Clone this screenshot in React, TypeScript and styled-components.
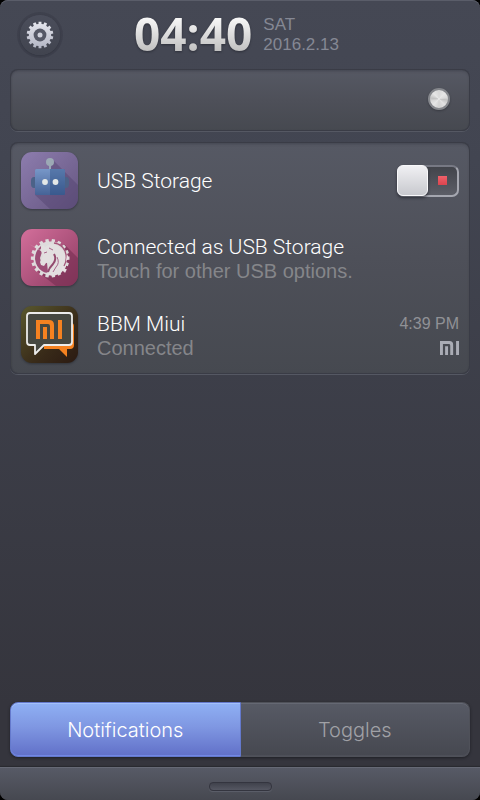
import React, { useState } from "react";
import styled, { createGlobalStyle, css } from "styled-components";

const GlobalStyle = createGlobalStyle`
  *, *::before, *::after { box-sizing: border-box; }
  body { margin: 0; background: #000; font-family: "Liberation Sans", Arial, sans-serif; }
  button, input { font: inherit; margin: 0; }
`;

const Shade = styled.div`
  min-height: 100vh;
  display: flex;
  flex-direction: column;
  overflow: hidden;
  border-radius: 8px;
  background: linear-gradient(#454854, #424551 20%, #35353d 88%, #35353d);
  box-shadow: inset 0 1px 0 #5a5d69;
`;

const Header = styled.header`
  display: flex;
  align-items: center;
  height: 69px;
  padding: 0 20px;
`;

const SettingsButton = styled.button`
  display: grid;
  place-items: center;
  width: 40px;
  height: 40px;
  padding: 0;
  border: 0;
  border-radius: 50%;
  background: linear-gradient(#4b4e5b, #41444f);
  box-shadow: 0 0 0 3px rgba(30, 32, 42, 0.16), 0 1px 2px rgba(20, 22, 30, 0.25);
`;

const Clock = styled.time`
  margin-left: 74px;
  padding-bottom: 4px;
  font: 700 46px/60px "Open Sans", "Noto Sans", sans-serif;
  color: transparent;
  background: linear-gradient(#f6f6f6 25%, #b9b9b9 82%);
  background-clip: text;
  -webkit-background-clip: text;
  filter: drop-shadow(0 1px 1px rgba(20, 22, 30, 0.5));
`;

const DateText = styled.div`
  margin-left: 11px;
  font-size: 17px;
  line-height: 20px;
  color: #858894;
`;

const surface = css`
  margin: 0 10px;
  border-radius: 8px;
  background: linear-gradient(#565964, #4e5059 50%, #464950);
  box-shadow:
    inset 0 0 0 1px #3a3c46,
    inset 0 2px 3px rgba(25, 27, 36, 0.3),
    inset 1px 0 2px rgba(25, 27, 36, 0.2),
    0 1px 0 #555863;
`;

const BrightnessPanel = styled.label`
  ${surface}
  display: flex;
  align-items: center;
  height: 62px;
  padding: 0 20px 2px;
`;

const Slider = styled.input`
  appearance: none;
  width: 100%;
  height: 24px;
  background: transparent;
  &::-webkit-slider-thumb {
    appearance: none;
    width: 22px;
    height: 22px;
    border: 2px solid #85878c;
    border-radius: 50%;
    background: conic-gradient(#d8d8d8, #e6e6e6 45deg, #dadada 80deg, #c2c2c2 95deg, #e2e2e2 135deg, #d2d2d2 180deg, #e6e6e6 225deg, #d8d8d8 255deg, #c2c2c2 275deg, #e6e6e6 315deg, #d8d8d8);
    box-shadow: 0 1px 2px rgba(20, 22, 30, 0.35);
  }
`;

const List = styled.ul`
  ${surface}
  margin-top: 11px;
  padding: 0 0 1px;
  list-style: none;
`;

const Row = styled.li`
  display: flex;
  align-items: center;
  height: 77px;
  padding: 0 11px;
`;

const AppIcon = styled.svg`
  flex: none;
  width: 57px;
  height: 57px;
  filter: drop-shadow(0 1px 1px rgba(20, 22, 30, 0.45));
`;

const RowText = styled.div`
  flex: 1;
  min-width: 0;
  margin-left: 19px;
`;

const Title = styled.div`
  font: 300 21px/26px Roboto, sans-serif;
  color: #fff;
`;

const Subtitle = styled.div`
  font-size: 20px;
  line-height: 22px;
  color: #85868a;
`;

const Meta = styled.div`
  display: flex;
  flex-direction: column;
  align-items: flex-end;
  gap: 8px;
  font-size: 16px;
  line-height: 18px;
  color: #909196;
`;

const Switch = styled.label`
  display: flex;
  align-items: center;
  width: 62px;
  height: 34px;
`;

const SwitchInput = styled.input`
  appearance: none;
  display: flex;
  align-items: center;
  width: 100%;
  height: 32px;
  border: 2px solid #a5a7b0;
  border-top-color: #777984;
  border-radius: 7px;
  background:
    linear-gradient(#f0616a, #db444e) 39px 9px / 9px 9px no-repeat,
    linear-gradient(#42444b, #5c5e67);
  &::before {
    content: "";
    width: 31px;
    height: 31px;
    margin-left: -2px;
    border: 1px solid #f8f8fa;
    border-radius: 6px;
    background: linear-gradient(#f0f0f3, #c8c9ce);
    box-shadow: 0 2px 3px rgba(20, 22, 30, 0.6);
  }
  &:checked { background: linear-gradient(#5873c4, #7f9ceb); }
  &:checked::before { margin-left: 29px; }
`;

const Tabs = styled.div`
  display: flex;
  margin: auto 10px 10px;
  border-radius: 8px;
  box-shadow: 0 1px 3px rgba(15, 16, 20, 0.6);
`;

const Tab = styled.button<{ $active: boolean }>`
  flex: 1 1 0;
  height: 55px;
  padding: 0;
  border: 1px solid ${(p) => (p.$active ? "#6479cc" : "#4f5159")};
  font: 300 20px/24px Inter, sans-serif;
  color: ${(p) => (p.$active ? "#fff" : "#a0a1a6")};
  background: ${(p) =>
    p.$active ? "linear-gradient(#8fb0f4, #7f97e2 45%, #6170c8)" : "linear-gradient(#575a65, #464850)"};
  box-shadow: ${(p) =>
    p.$active ? "inset 0 1px 0 #a3c0fa, inset 0 -1px 0 #7287e4" : "inset 0 1px 0 #656873, inset 0 -1px 0 #4d4f58"};
  &:first-child { border-radius: 8px 0 0 8px; }
  &:last-child { border-radius: 0 8px 8px 0; border-left: 0; }
`;

const Footer = styled.footer`
  display: grid;
  place-items: center;
  height: 33px;
  padding-top: 4px;
  border-top: 1px solid #666975;
  background: linear-gradient(#575a66, #464850);
  box-shadow: 0 -1px 1px #292a30;
`;

const Handle = styled.button`
  width: 63px;
  height: 9px;
  padding: 0;
  border: 1px solid #34353f;
  border-radius: 4px;
  background: linear-gradient(#40424c, #555762);
  box-shadow: 0 1px 1px #5d606b;
`;

function gearPath(c: number, teeth: number, outer: number, inner: number, phase: number) {
  const step = (Math.PI * 2) / teeth;
  const points: string[] = [];
  for (let i = 0; i < teeth; i++) {
    const a = (i + phase) * step - Math.PI / 2;
    for (const [r, f] of [[inner, -0.3], [outer, -0.24], [outer, 0.24], [inner, 0.3]]) {
      points.push(`${(c + r * Math.cos(a + f * step)).toFixed(2)} ${(c + r * Math.sin(a + f * step)).toFixed(2)}`);
    }
  }
  return `M${points.join("L")}Z`;
}

const GearGlyph = () => (
  <svg width="28" height="28" viewBox="0 0 28 28" aria-hidden="true">
    <defs>
      <linearGradient id="gear" x2="0" y2="1">
        <stop stopColor="#e6e7ee" />
        <stop offset="1" stopColor="#b1b4c3" />
      </linearGradient>
    </defs>
    <path fill="url(#gear)" d={gearPath(14, 14, 13.4, 11.2, 0)} />
    <circle cx="14" cy="14" r="6.4" fill="#555866" />
    <circle cx="14" cy="14" r="2.5" fill="#d0d2dc" />
  </svg>
);

const RobotIcon = () => (
  <AppIcon viewBox="0 0 57 57" aria-hidden="true">
    <defs>
      <linearGradient id="violet" x2="1" y2="1">
        <stop stopColor="#8d7dae" />
        <stop offset="1" stopColor="#655580" />
      </linearGradient>
      <linearGradient id="head" x2="0" y2="1">
        <stop stopColor="#7797c8" />
        <stop offset="1" stopColor="#466397" />
      </linearGradient>
    </defs>
    <rect width="57" height="57" rx="11" fill="url(#violet)" />
    <path d="M32 8 57 33v13a11 11 0 0 1-11 11H29L14 43V20h15Z" fill="#52436f" opacity=".45" />
    <path d="M14 25h-1q-3 0-3 4v3q0 4 3 4h1ZM44 25h1q3 0 3 4v3q0 4-3 4h-1Z" fill="#4b6288" />
    <rect x="28" y="11" width="2" height="8" fill="#9aa7b6" />
    <circle cx="29" cy="10" r="4" fill="#9ca9b5" />
    <rect x="14" y="17" width="30" height="26" rx="1.5" fill="url(#head)" />
    <path d="M29 17h14q1 0 1 1v24q0 1-1 1H29Z" fill="#294c80" opacity=".4" />
    <circle cx="24" cy="30" r="2.9" fill="#e4e8e7" />
    <circle cx="34.5" cy="30" r="2.9" fill="#e4e8e7" />
  </AppIcon>
);

const UnicornIcon = () => (
  <AppIcon viewBox="0 0 57 57" aria-hidden="true">
    <defs>
      <linearGradient id="rose" x2="1" y2="1">
        <stop stopColor="#d36f9b" />
        <stop offset="1" stopColor="#8d3b61" />
      </linearGradient>
    </defs>
    <rect width="57" height="57" rx="11" fill="url(#rose)" />
    <path d="M43 15 57 29v17a11 11 0 0 1-11 11H35L17 43Z" fill="#762f52" opacity=".6" />
    <path d={gearPath(29.2, 18, 19.4, 16.8, 0.5)} fill="#dedbdc" />
    <path d="M20 17q-6 5-6 13 1 8 7 12 4 3 6 1l-1-9-3-2-3 1-1-4 2-6-1-4Z" fill="#9c4d75" />
    <path d="m8 15 11 6 3-5 2 2 5-3 6 1 6 4 4 8v10l-5 6-7 3-7-1 4-9-1-4-4 1-2 3-3-1-1-3 3-6-2-5Z" fill="#e3dfe0" />
    <path d="M33 14q8 1 11 8 3 8-1 15" fill="none" stroke="#a45479" strokeWidth="1.3" />
    <path d="M33 25q3 5-1 10-4 4-5 8" fill="none" stroke="#934a6e" strokeWidth="2" />
    <path d="M36 28q3 6-1 10l-3 5M23 24l3-1M28 19l4 2" fill="none" stroke="#a8668a" strokeWidth="1" />
    <path d="M41 37q2 4 5 3l-2 4-3-4M46 25l2 4-3 3" fill="#eadfe4" />
  </AppIcon>
);

const miBars = (
  <>
    <path d="M0 0h13q5 0 5 5v14h-4V6q0-2-2-2H4v15H0Z" />
    <path d="M7 7h4v12H7zM22 0h4v19h-4z" />
  </>
);

const MessengerIcon = () => (
  <AppIcon viewBox="0 0 57 57" aria-hidden="true">
    <defs>
      <linearGradient id="olive" x2="1" y2="1">
        <stop stopColor="#59582e" />
        <stop offset=".6" stopColor="#392b19" />
        <stop offset="1" stopColor="#2b1a12" />
      </linearGradient>
    </defs>
    <rect width="57" height="57" rx="11" fill="url(#olive)" />
    <path d="M50 17q3 0 3 3v19q0 4-4 4h-3v8l-8-8H23v-5h27Z" fill="#f58220" />
    <path
      d="M9 7h39q3 0 3 3v26q0 3-3 3H23l-9 9v-9H9q-3 0-3-3V10q0-3 3-3Z"
      fill="#464841"
      stroke="#ececeb"
      strokeWidth="1.8"
      strokeLinejoin="round"
    />
    <g fill="#f58220" transform="translate(15 14)">{miBars}</g>
  </AppIcon>
);

const MiMark = () => (
  <svg width="19" height="14" viewBox="0 0 26 19" fill="#aaacb5" aria-label="Mi" role="img">
    {miBars}
  </svg>
);

const tabNames = ["Notifications", "Toggles"];

export default function App() {
  const [tab, setTab] = useState(0);
  return (
    <>
      <GlobalStyle />
      <Shade>
        <Header>
          <SettingsButton aria-label="Settings">
            <GearGlyph />
          </SettingsButton>
          <Clock>04:40</Clock>
          <DateText>
            SAT
            <br />
            2016.2.13
          </DateText>
        </Header>
        <BrightnessPanel>
          <Slider type="range" min="0" max="100" defaultValue="100" aria-label="Brightness" />
        </BrightnessPanel>
        <List>
          <Row>
            <RobotIcon />
            <RowText>
              <Title as="label" htmlFor="usb">USB Storage</Title>
            </RowText>
            <Switch>
              <SwitchInput id="usb" type="checkbox" role="switch" />
            </Switch>
          </Row>
          <Row>
            <UnicornIcon />
            <RowText>
              <Title>Connected as USB Storage</Title>
              <Subtitle>Touch for other USB options.</Subtitle>
            </RowText>
          </Row>
          <Row>
            <MessengerIcon />
            <RowText>
              <Title>BBM Miui</Title>
              <Subtitle>Connected</Subtitle>
            </RowText>
            <Meta>
              <time>4:39 PM</time>
              <MiMark />
            </Meta>
          </Row>
        </List>
        <Tabs role="tablist">
          {tabNames.map((name, i) => (
            <Tab key={name} role="tab" aria-selected={tab === i} $active={tab === i} onClick={() => setTab(i)}>
              {name}
            </Tab>
          ))}
        </Tabs>
        <Footer>
          <Handle aria-label="Close panel" />
        </Footer>
      </Shade>
    </>
  );
}
